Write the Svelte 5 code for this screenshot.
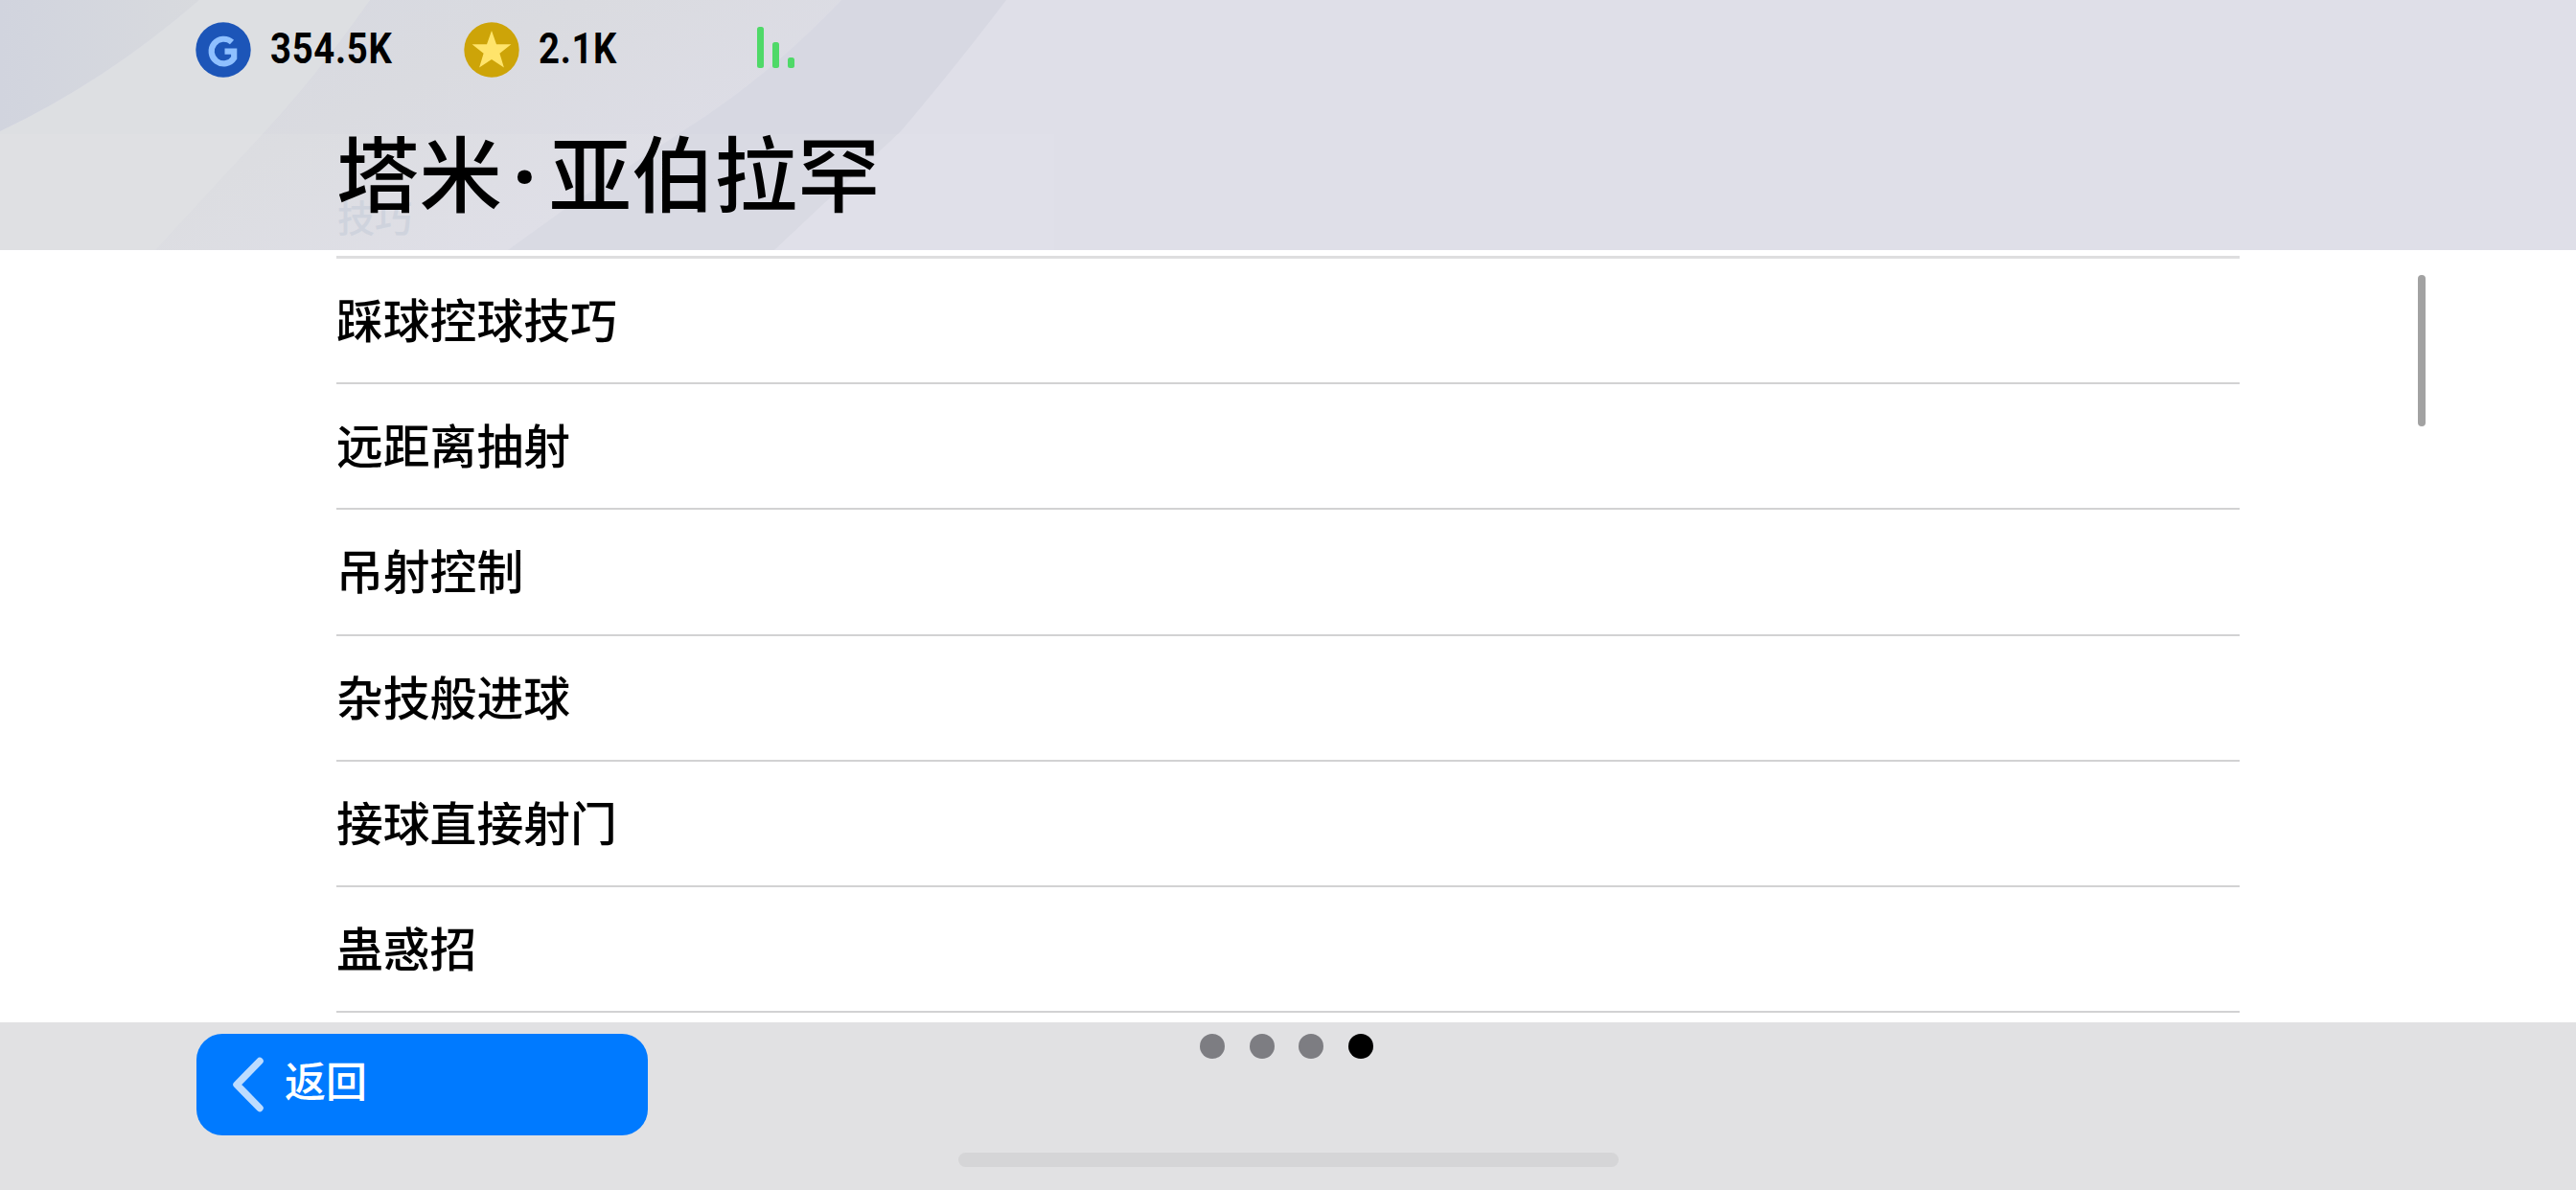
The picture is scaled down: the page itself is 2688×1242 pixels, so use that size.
<script>
    const balances = [
        { kind: "gp", amount: "354.5K" },
        { kind: "coin", amount: "2.1K" },
    ];

    const skills = [
        "踩球控球技巧",
        "远距离抽射",
        "吊射控制",
        "杂技般进球",
        "接球直接射门",
        "蛊惑招",
    ];

    const pages = 4;
    let currentPage = 3;
</script>

<div class="screen">
    <header>
        <svg class="backdrop" width="1100" height="261" viewBox="0 0 1100 261">
            <defs>
                <linearGradient id="middle" x1="0" y1="0" x2="0.8" y2="0.6">
                    <stop offset="0.1" stop-color="#d7d9e1" />
                    <stop offset="0.5" stop-color="#dadbe0" />
                    <stop offset="1" stop-color="#dddde6" />
                </linearGradient>
                <linearGradient id="corner" x1="0" y1="0" x2="1" y2="0">
                    <stop offset="0" stop-color="#d1d4de" />
                    <stop offset="1" stop-color="#d8dade" />
                </linearGradient>
            </defs>
            <path fill="url(#middle)" d="M386 0H878Q800 82 712 137L595 214L530 261H162Z" />
            <path fill="#d7d8e2" d="M878 0H1050Q1000 66 940 137L808 261H530L595 214L712 137Q800 82 878 0Z" />
            <path fill="#dddfe2" d="M208 0H386Q330 80 272 142L162 261H0V137Q110 85 208 0Z" />
            <path fill="url(#corner)" d="M0 0H208Q110 85 0 137Z" />
            <rect y="140" width="1100" height="121" fill="#fff" opacity="0.06" />
        </svg>
        <div class="wallet">
            {#each balances as balance}
            <div class="balance {balance.kind}">
                <svg width="58" height="58" viewBox="0 0 58 58">
                    {#if balance.kind == "gp"}
                    <circle cx="29" cy="29" r="28.7" fill="#1c55b8" />
                    <path d="M38 21A12.8 12.8 0 1 0 40.2 37.5V30.6H30.5" fill="none" stroke="#8fc0ff" stroke-width="6.2" />
                    {:else}
                    <circle cx="29" cy="29" r="28.7" fill="#cda408" />
                    <path d="M29 9L34 23.3H49.4L37.4 32.8L41.9 47.5L29 39L16.1 47.5L20.6 32.8L8.6 23.3H24Z" fill="#ffe46b" />
                    {/if}
                </svg>
                <span>{balance.amount}</span>
            </div>
            {/each}
            <svg class="signal" width="40" height="44" viewBox="0 0 40 44">
                <rect x="0" y="0" width="7" height="43" rx="2.5" />
                <rect x="16" y="16" width="7" height="27" rx="2.5" />
                <rect x="32" y="32" width="7" height="11" rx="2.5" />
            </svg>
        </div>
        <h1>塔米<span class="dot">·</span>亚伯拉罕</h1>
        <div class="section">技巧</div>
    </header>

    <main>
        <ul>
            {#each skills as skill}
            <li>{skill}</li>
            {/each}
        </ul>
        <div class="scrollbar"></div>
    </main>

    <footer>
        <button>
            <svg width="34" height="58" viewBox="0 0 34 58">
                <path d="M29 4.5L5 29L29 53.5" />
            </svg>
            <span>返回</span>
        </button>
        <div class="pager">
            {#each Array(pages) as _, i}
            <i class={i == currentPage ? "active" : ""}></i>
            {/each}
        </div>
        <div class="home"></div>
    </footer>
</div>

<style>
    :global(body) {
        background-color: #fff;
    }

    .screen {
        width: 2688px;
        height: 1242px;
        display: flex;
        flex-direction: column;
        overflow: hidden;
        color: #000;
        font-family: "Noto Sans CJK SC", sans-serif;
        font-weight: 500;
    }

    header {
        position: relative;
        height: 261px;
        box-sizing: border-box;
        padding-top: 22px;
        background-color: #dfdfe8;
    }

    .backdrop {
        position: absolute;
        left: 0;
        top: 0;
    }

    .wallet {
        position: relative;
        display: flex;
        height: 59px;
        padding-left: 204px;
    }

    .balance {
        display: flex;
        align-items: center;
        width: 280px;
    }

    .balance svg {
        flex: none;
        margin-right: 20px;
    }

    .balance span {
        font: 700 44px/58px Roboto, sans-serif;
        letter-spacing: 0.8px;
        padding-bottom: 2px;
        transform: scaleX(0.87);
        transform-origin: left;
    }

    .signal {
        margin: 6px 0 0 26px;
        fill: #4fd968;
    }

    h1 {
        position: relative;
        z-index: 1;
        margin: 0 0 0 351px;
        padding-top: 32px;
        font-size: 86.4px;
        line-height: 130px;
        font-weight: 500;
        white-space: nowrap;
    }

    .dot {
        display: inline-block;
        width: 49px;
        font-family: "Noto Sans", sans-serif;
        font-weight: 700;
        line-height: 1;
        text-align: center;
        text-indent: -2px;
    }

    /* heading of the list, scrolled away under the header */
    .section {
        position: absolute;
        left: 352px;
        top: 197px;
        font-size: 39px;
        line-height: 56px;
        color: #c9cfdb;
        opacity: 0.7;
    }

    main {
        position: relative;
        height: 806px;
        padding: 6px 351px 0;
        box-sizing: border-box;
        overflow: hidden;
    }

    ul {
        list-style-type: none;
        margin: 0;
        padding: 0;
        border-top: 3px solid #dededf;
    }

    li {
        height: 131.2px;
        box-sizing: border-box;
        border-bottom: 2px solid #d2d2d3;
        font-size: 48.8px;
        line-height: 123px;
    }

    .scrollbar {
        position: absolute;
        left: 2523px;
        top: 26px;
        width: 8px;
        height: 158px;
        border-radius: 4px;
        background-color: #a2a2a2;
    }

    footer {
        flex: 1;
        display: grid;
        grid-template-columns: 1fr auto 1fr;
        grid-template-rows: 106px 1fr;
        padding-top: 12px;
        background-color: #e1e1e3;
    }

    button {
        display: flex;
        align-items: center;
        width: 471px;
        height: 106px;
        margin-left: 205px;
        padding: 0 0 0 37px;
        border: none;
        border-radius: 27px;
        background-color: #007aff;
        color: #fff;
        font: inherit;
        font-size: 43px;
    }

    button svg {
        margin-right: 21px;
        fill: none;
        stroke: #bddcff;
        stroke-width: 7.5px;
        stroke-linecap: round;
        stroke-linejoin: round;
    }

    button span {
        padding-bottom: 13px;
    }

    .pager {
        display: flex;
        gap: 25.7px;
        padding-right: 3px;
    }

    .pager i {
        width: 26px;
        height: 26px;
        border-radius: 50%;
        background-color: #7d7d82;
    }

    .pager .active {
        background-color: #000;
    }

    .home {
        grid-column: 1 / -1;
        justify-self: center;
        width: 689px;
        height: 15px;
        margin-top: 18px;
        border-radius: 8px;
        background-color: #d5d5d7;
    }
</style>
